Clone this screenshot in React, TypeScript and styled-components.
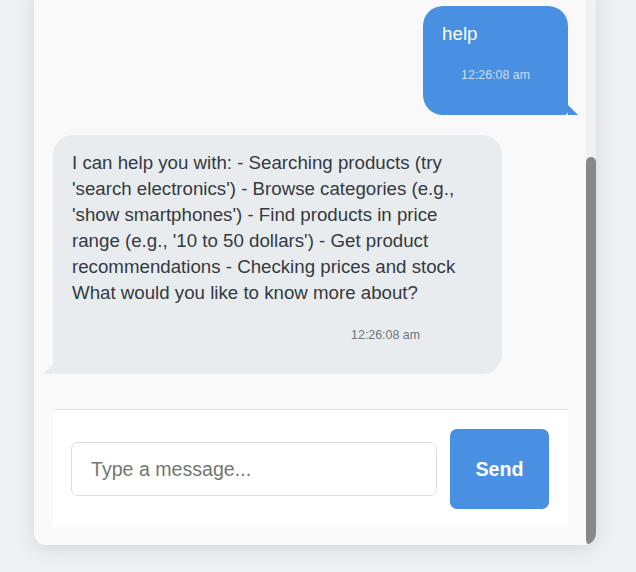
import React from "react";
import styled, { createGlobalStyle } from "styled-components";

const GlobalStyle = createGlobalStyle`
  html, body {
    margin: 0;
    padding: 0;
    background: #eef0f4;
    font-family: "Liberation Sans", Arial, sans-serif;
    overflow: hidden;
  }
  * { box-sizing: border-box; }
`;

const Page = styled.div`
  height: 100vh;
  overflow: hidden;
  display: flex;
  flex-direction: column;
  justify-content: flex-end;
  padding: 0 0 27px 34px;
`;

const Card = styled.div`
  width: 562px;
  height: 563px;
  flex-shrink: 0;
  display: flex;
  background: #f9f9f9;
  border-radius: 12px;
  box-shadow: 0 4px 20px rgba(0, 0, 0, 0.1);
  overflow: hidden;
`;

const Content = styled.div`
  flex: 1;
  min-width: 0;
  display: flex;
  flex-direction: column;
  justify-content: flex-end;
  padding: 19px 18px 18px 19px;
`;

const ScrollTrack = styled.div`
  width: 10px;
  flex-shrink: 0;
  display: flex;
  flex-direction: column;
  justify-content: flex-end;
  background: #f1f1f1;
`;

const ScrollThumb = styled.div`
  height: 388px;
  background: #888888;
  border-radius: 5px;
`;

const MessageList = styled.div`
  display: flex;
  flex-direction: column;
  gap: 20px;
  padding-bottom: 35px;
`;

const Bubble = styled.div<{ $user?: boolean }>`
  position: relative;
  align-self: ${(p) => (p.$user ? "flex-end" : "flex-start")};
  max-width: 449px;
  display: flex;
  flex-direction: column;
  padding: 15px 19px;
  border-radius: 20px;
  ${(p) =>
    p.$user ? "border-bottom-right-radius: 4px;" : "border-bottom-left-radius: 4px;"}
  background: ${(p) => (p.$user ? "#4a90e2" : "#e9ecef")};
  color: ${(p) => (p.$user ? "#ffffff" : "#343a40")};
  font-size: 18.7px;
  line-height: 1.4;

  &::after {
    content: "";
    position: absolute;
    bottom: 0;
    width: 0;
    height: 0;
    border-top: 10px solid transparent;
    ${(p) =>
      p.$user
        ? `right: -10px; border-left: 10px solid #4a90e2;`
        : `left: -10px; border-right: 10px solid #e9ecef;`}
  }
`;

const Text = styled.div``;

const Time = styled.div<{ $user?: boolean }>`
  align-self: flex-end;
  font-size: 12.4px;
  line-height: 1.4;
  margin: 20px ${(p) => (p.$user ? "19px" : "63px")} 15px 19px;
  color: ${(p) => (p.$user ? "rgba(255, 255, 255, 0.72)" : "#6c757d")};
`;

const InputArea = styled.form`
  display: flex;
  align-items: center;
  gap: 13px;
  background: #ffffff;
  border-top: 1px solid #e0e0e0;
  padding: 19px 19px 18px 18px;
`;

const Input = styled.input`
  flex: 1;
  min-width: 0;
  height: 54px;
  padding: 0 19px;
  font-family: "Liberation Sans", Arial, sans-serif;
  font-size: 19.6px;
  color: #333;
  border: 1px solid #dddddd;
  border-radius: 7px;
  background: #fff;
  outline: none;

  &::placeholder {
    color: #757575;
  }
`;

const SendButton = styled.button`
  width: 99px;
  height: 80px;
  padding: 0;
  border: none;
  border-radius: 7px;
  background: #4a90e2;
  color: #ffffff;
  font-family: "Liberation Sans", Arial, sans-serif;
  font-size: 19.7px;
  font-weight: bold;
  cursor: pointer;
`;

type Msg = { user: boolean; text: string; time: string };

const messages: Msg[] = [
  { user: true, text: "help", time: "12:26:08 am" },
  {
    user: false,
    text:
      "I can help you with: - Searching products (try 'search electronics') - Browse categories (e.g., 'show smartphones') - Find products in price range (e.g., '10 to 50 dollars') - Get product recommendations - Checking prices and stock What would you like to know more about?",
    time: "12:26:08 am",
  },
];

export default function App() {
  return (
    <>
      <GlobalStyle />
      <Page>
        <Card>
          <Content>
            <MessageList>
              {messages.map((m, i) => (
                <Bubble key={i} $user={m.user}>
                  <Text>{m.text}</Text>
                  <Time $user={m.user}>{m.time}</Time>
                </Bubble>
              ))}
            </MessageList>
            <InputArea onSubmit={(e) => e.preventDefault()}>
              <Input placeholder="Type a message..." />
              <SendButton type="submit">Send</SendButton>
            </InputArea>
          </Content>
          <ScrollTrack>
            <ScrollThumb />
          </ScrollTrack>
        </Card>
      </Page>
    </>
  );
}
